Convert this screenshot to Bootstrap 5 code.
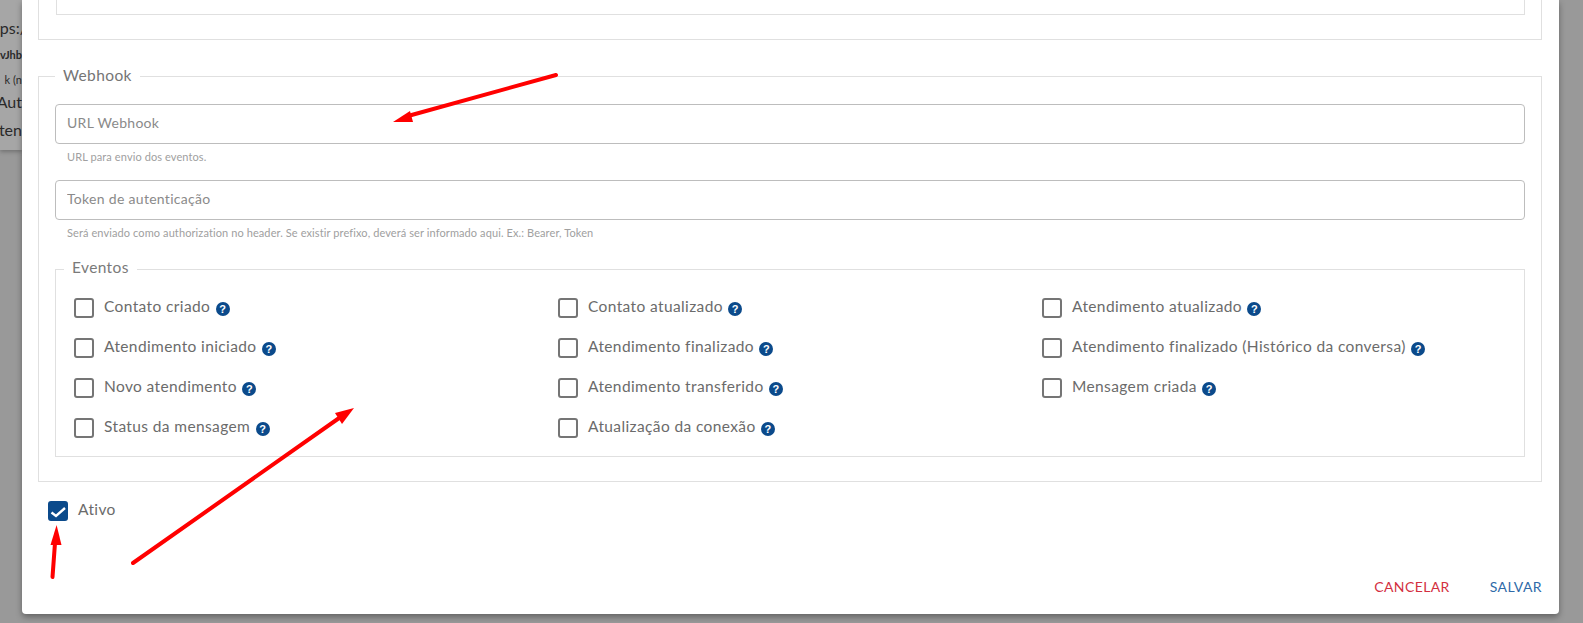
<!doctype html>
<html lang="pt-BR">
<head>
<meta charset="utf-8">
<title>Webhook</title>
<link href="https://cdn.jsdelivr.net/npm/bootstrap@5.3.0/dist/css/bootstrap.min.css" rel="stylesheet">
<style>
html,body{height:623px;overflow:hidden}
body{background:#999;font-family:"Lato","Noto Sans",sans-serif;color:#666;position:relative}
.stage{height:623px}
.side-l{width:22px;flex:none;overflow:hidden}
.side-r{flex:1 1 auto}
.under{height:150px;background:#a6a6a6;box-shadow:0 2px 4px rgba(0,0,0,.25);overflow:hidden;color:#2a2a2a}
.under div{white-space:nowrap;display:flex;justify-content:flex-end}
.u1{height:16px;margin-top:20px;margin-right:-5px;font-size:16px;line-height:16px}
.u2{height:14px;margin-top:12px;font-size:11px;line-height:14px;font-weight:700}
.u3{height:14px;margin-top:11px;font-size:11px;line-height:14px}
.u4{height:18px;margin-top:6px;font-size:16px;line-height:18px}
.u5{height:18px;margin-top:10px;font-size:16px;line-height:18px}
.sheet{width:1537px;height:614px;flex:none;background:#fff;border-radius:0 0 4px 4px;box-shadow:0 3px 6px rgba(0,0,0,.35);padding:0 17px 0 16px;overflow:hidden}
.frag-o{height:40px;border:1px solid #e0e0e0;border-top:0;padding:0 16px 0 17px}
.frag-i{height:15px;border:1px solid #e0e0e0;border-top:0}
.fs{border:1px solid #e0e0e0;min-width:0}
.fs legend{float:none;width:auto;margin:0;line-height:20px;font-size:15.5px;letter-spacing:.38px}
.fs-a{margin-top:25px;padding:0 16px 0 16px;height:417px}
.fs-a legend{padding:0 8px 2px;margin-left:0;color:#757575}
.fs-b{height:200px;margin-top:17px;padding:0 0 0 18px}
.fs-b legend{padding:0 8px 4px;margin-left:-10px;color:#7a7a7a}
.fld{height:40px;border:1px solid #bdbdbd;border-radius:4px;padding:0 11px 3px;font-size:14px;letter-spacing:.3px;color:#666;box-shadow:none}
.fld::placeholder{color:#8a8a8a}
.fld-first{margin-top:17px}
.fld-next{margin-top:16px}
.hint{font-size:11px;letter-spacing:.1px;line-height:14px;color:#a0a0a0;margin:6px 0 0 12px}
.ev-grid{width:1452px;margin-top:15px}
.ev{height:40px;padding-top:1px}
.ev .form-check-input{width:20px;height:20px;margin:1px 10px 0 0;float:none;flex:none;border:2px solid #757575;border-radius:3px;background-color:#fff;box-shadow:none}
.ev .form-check-input:checked{background-color:#0b4a8b;border-color:#0b4a8b;background-origin:border-box;background-size:100% 100%;background-image:url("data:image/svg+xml,%3csvg xmlns='http://www.w3.org/2000/svg' viewBox='0 0 20 20'%3e%3cpath fill='none' stroke='%23fff' stroke-width='2.4' d='M3.5 11.5 8 15l9-8'/%3e%3c/svg%3e")}
.ev label{font-size:15.5px;letter-spacing:.38px;line-height:20px;color:#6b6b6b;margin-top:-1px}
.q{display:inline-flex;align-items:center;justify-content:center;width:14px;height:14px;border-radius:50%;background:#0b4a8b;color:#fff;font:700 11px/14px "Liberation Sans",sans-serif;letter-spacing:0;margin-left:1px;vertical-align:-1px}
.ativo{margin:17px 0 0 10px}
.acts{margin-top:38px;gap:40px}
.acts .btn{padding:0;border:0;font-size:14px;letter-spacing:.4px;line-height:20px;border-radius:0}
.b-c{color:#d32f3f}
.b-s{color:#2f6aa8}
.marks{position:absolute;left:0;top:0;pointer-events:none}
</style>
</head>
<body>
<div class="stage d-flex">
  <div class="side-l">
    <div class="under">
      <div class="u1">https:/</div>
      <div class="u2">vJhb</div>
      <div class="u3">k (n</div>
      <div class="u4">Aut</div>
      <div class="u5">ten</div>
    </div>
  </div>
  <div class="sheet">
    <div class="frag-o"><div class="frag-i"></div></div>
    <fieldset class="fs fs-a">
      <legend>Webhook</legend>
      <input class="form-control fld fld-first" type="text" placeholder="URL Webhook">
      <div class="hint">URL para envio dos eventos.</div>
      <input class="form-control fld fld-next" type="text" placeholder="Token de autenticação">
      <div class="hint">Será enviado como authorization no header. Se existir prefixo, deverá ser informado aqui. Ex.: Bearer, Token</div>
      <fieldset class="fs fs-b">
        <legend>Eventos</legend>
        <div class="row g-0 ev-grid">
          <div class="col-4 ev d-flex"><input class="form-check-input" type="checkbox" id="e1"><label for="e1">Contato criado <span class="q">?</span></label></div>
          <div class="col-4 ev d-flex"><input class="form-check-input" type="checkbox" id="e2"><label for="e2">Contato atualizado <span class="q">?</span></label></div>
          <div class="col-4 ev d-flex"><input class="form-check-input" type="checkbox" id="e3"><label for="e3">Atendimento atualizado <span class="q">?</span></label></div>
          <div class="col-4 ev d-flex"><input class="form-check-input" type="checkbox" id="e4"><label for="e4">Atendimento iniciado <span class="q">?</span></label></div>
          <div class="col-4 ev d-flex"><input class="form-check-input" type="checkbox" id="e5"><label for="e5">Atendimento finalizado <span class="q">?</span></label></div>
          <div class="col-4 ev d-flex"><input class="form-check-input" type="checkbox" id="e6"><label for="e6">Atendimento finalizado (Histórico da conversa) <span class="q">?</span></label></div>
          <div class="col-4 ev d-flex"><input class="form-check-input" type="checkbox" id="e7"><label for="e7">Novo atendimento <span class="q">?</span></label></div>
          <div class="col-4 ev d-flex"><input class="form-check-input" type="checkbox" id="e8"><label for="e8">Atendimento transferido <span class="q">?</span></label></div>
          <div class="col-4 ev d-flex"><input class="form-check-input" type="checkbox" id="e9"><label for="e9">Mensagem criada <span class="q">?</span></label></div>
          <div class="col-4 ev d-flex"><input class="form-check-input" type="checkbox" id="e10"><label for="e10">Status da mensagem <span class="q">?</span></label></div>
          <div class="col-4 ev d-flex"><input class="form-check-input" type="checkbox" id="e11"><label for="e11">Atualização da conexão <span class="q">?</span></label></div>
        </div>
      </fieldset>
    </fieldset>
    <div class="ev d-flex ativo"><input class="form-check-input" type="checkbox" id="at" checked><label for="at">Ativo</label></div>
    <div class="d-flex justify-content-end acts">
      <button type="button" class="btn b-c">CANCELAR</button>
      <button type="button" class="btn b-s">SALVAR</button>
    </div>
  </div>
  <div class="side-r"></div>
</div>
<svg class="marks" width="1583" height="623" viewBox="0 0 1583 623" aria-hidden="true">
  <g stroke="#f00" stroke-width="4" stroke-linecap="round" fill="none">
    <path d="M556 75 L408 116"/>
    <path d="M133 563 L342 416"/>
    <path d="M52.5 577 L55 543"/>
  </g>
  <g fill="#f00">
    <path d="M393 122 L410 111 L413 122 Z"/>
    <path d="M354 408 L335 413 L342 424 Z"/>
    <path d="M56.6 525 L50.5 545 L61.5 545 Z"/>
  </g>
</svg>
</body>
</html>
